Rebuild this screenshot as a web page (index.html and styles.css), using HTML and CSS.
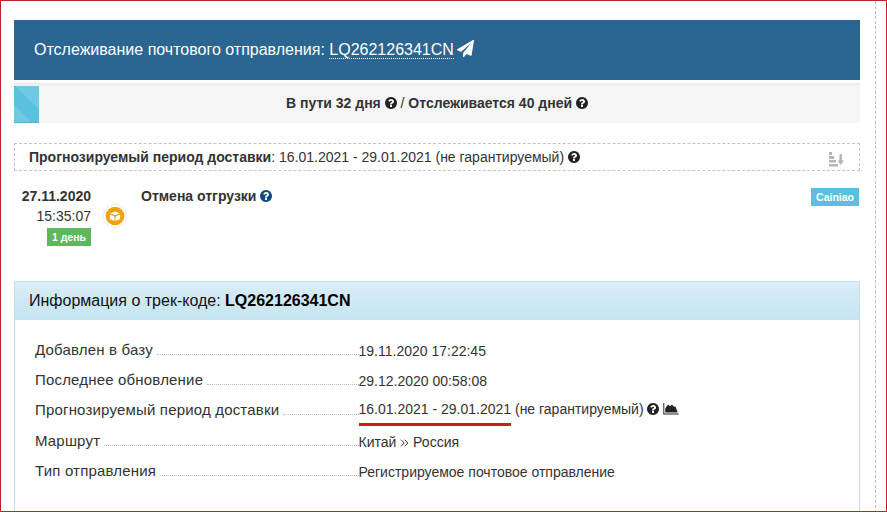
FILE: index.html
```html
<!DOCTYPE html>
<html lang="ru">
<head>
    <meta charset="UTF-8">
    <meta name="viewport" content="width=device-width, initial-scale=1.0">
    <title>Отслеживание почтового отправления</title>
    <link rel="stylesheet" href="styles.css">
</head>
<body>
    <svg class="sprite">
        <symbol id="question" viewBox="128 128 1536 1536">
            <path d="M1024 1376v-192q0-14-9-23t-23-9h-192q-14 0-23 9t-9 23v192q0 14 9 23t23 9h192q14 0 23-9t9-23zm256-672q0-88-55.5-163t-138.5-116-170-41q-243 0-371 213-15 24 8 42l132 100q7 6 19 6 16 0 25-12 53-68 86-92 34-24 86-24 48 0 85.5 26t37.5 59q0 38-20 61t-68 45q-63 28-115.5 86.5t-52.5 125.5v36q0 14 9 23t23 9h192q14 0 23-9t9-23q0-19 21.5-49.5t54.5-49.5q32-18 49-28.5t46-35 44.5-48 28-60.5 12.5-81zm384 192q0 209-103 385.5t-279.5 279.5-385.5 103-385.5-103-279.5-279.5-103-385.5 103-385.5 279.5-279.5 385.5-103 385.5 103 279.5 279.5 103 385.5z"/>
        </symbol>
    </svg>
    <div class="page">
        <div class="content">
            <h1 class="title"><span class="title-text">Отслеживание почтового отправления:</span> <a class="title-code">LQ262126341CN</a>
                <svg class="plane" viewBox="0 0 1792 1792"><path d="M1764 11q33 24 27 64l-256 1536q-5 29-32 45-14 8-31 8-11 0-24-5l-453-185-242 295q-18 23-49 23-13 0-22-4-19-7-30.5-23.5t-11.5-36.5v-349l864-1059-1069 925-395-162q-37-14-40-55-2-40 32-59l1664-960q15-9 32-9 20 0 36 11z"/></svg>
            </h1>

            <div class="progress">
                <div class="progress-bar"></div>
                <div class="progress-text"><b>В пути 32 дня</b> <svg class="icon"><use href="#question"/></svg> / <b>Отслеживается 40 дней</b> <svg class="icon"><use href="#question"/></svg></div>
            </div>

            <div class="forecast">
                <div><b>Прогнозируемый период доставки</b>: 16.01.2021 - 29.01.2021 (не гарантируемый) <svg class="icon"><use href="#question"/></svg></div>
                <svg class="sort" viewBox="0 0 16 15"><path d="M1 0h3v3H1zM1 4h5v3H1zM1 8h7v2.500H1zM1 12h9v2.500H1zM11.500 2h2.500v6.500h2L12.700 13 9.500 8.500h2z"/></svg>
            </div>

            <div class="event">
                <div class="event-date">
                    <b>27.11.2020</b>
                    <span>15:35:07</span>
                    <span class="label label-green">1 день</span>
                </div>
                <svg class="event-icon" viewBox="0 0 24 24">
                    <circle cx="12" cy="12" r="11.500" fill="#fff" stroke="#f6e8e2"/>
                    <circle cx="12" cy="12" r="9.300" fill="#f0a010"/>
                    <path fill="#fff" d="M12 7.500l4.800 1.900L12 11.300 7.200 9.400zM6.900 10.500l4.600 1.900v4.500l-4.600-2zM17.100 10.500l-4.600 1.900v4.500l4.600-2z"/>
                </svg>
                <div class="event-name"><b>Отмена отгрузки</b> <svg class="icon icon-blue"><use href="#question"/></svg></div>
                <span class="label label-blue">Cainiao</span>
            </div>

            <div class="panel">
                <div class="panel-heading"><span class="panel-text">Информация о трек-коде:</span> <b>LQ262126341CN</b></div>
                <dl class="info">
                    <dt>Добавлен в базу</dt>
                    <dd>19.11.2020 17:22:45</dd>
                    <dt>Последнее обновление</dt>
                    <dd>29.12.2020 00:58:08</dd>
                    <dt class="period">Прогнозируемый период доставки</dt>
                    <dd class="period"><span class="marked">16.01.2021 - 29.01.2021</span> (не гарантируемый) <svg class="icon"><use href="#question"/></svg>
                        <svg class="chart" viewBox="0 0 2048 1600"><path d="M2048 1408v128H0V0h128v1408zM256 1280V704l384-512 256 256 256-256 256 320 192-64 320 832z"/></svg></dd>
                    <dt>Маршрут</dt>
                    <dd>Китай <svg class="angle" viewBox="0 0 9 8"><path d="M1 .7L4.300 4 1 7.300M4.600 .7L7.900 4 4.600 7.300"/></svg> Россия</dd>
                    <dt>Тип отправления</dt>
                    <dd>Регистрируемое почтовое отправление</dd>
                </dl>
                <dl class="info info-more">
                    <dt>Второй доступный</dt>
                    <dd></dd>
                </dl>
            </div>
        </div>
    </div>
</body>
</html>
```

FILE: styles.css
```css
* {
    box-sizing: border-box;
}
body {
    margin: 0;
    font-family: "Liberation Sans", Arial, sans-serif;
    font-size: 14px;
    line-height: 20px;
    color: #333;
    background: #fff;
}
.sprite {
    display: none;
}
.page {
    height: 512px;
    padding: 19px 10px 0 13px;
    border: 1px solid #c8202b;
    overflow: hidden;
    display: flex;
}
.content {
    width: 862px;
    flex: none;
    height: 512px;
    margin-top: -19px;
    padding: 19px 15px 0 0;
    border-right: 1px dashed #bbb;
}
.icon {
    width: 12px;
    height: 12px;
    fill: #222;
    vertical-align: -1px;
}
.icon-blue {
    fill: #0d4a80;
}
.title {
    margin: 0;
    height: 60px;
    padding: 0 20px;
    font-size: 16px;
    font-weight: normal;
    line-height: 59px;
    color: #fff;
    background: #2b6693;
}
.title-code {
    border-bottom: 1px dotted #fff;
}
.plane {
    width: 17px;
    height: 17px;
    fill: #fff;
    margin-left: -1px;
    vertical-align: -2px;
}
.progress {
    display: flex;
    height: 40px;
    margin-top: 3px;
    padding-top: 3px;
    background: linear-gradient(#ebebeb, #f5f5f5 4px);
}
.progress-bar {
    width: 25px;
    height: 37px;
    background: linear-gradient(45deg, #70c8e2 30%, #5bc0de 30%, #5bc0de 62%, #70c8e2 62%);
    box-shadow: inset 0 -1px 0 #58afc9;
}
.progress-text {
    flex: 1;
    padding-right: 25px;
    line-height: 35px;
    text-align: center;
}
.forecast {
    display: flex;
    justify-content: space-between;
    height: 28px;
    margin-top: 20px;
    padding: 0 15px 0 14px;
    line-height: 26px;
    border: 1px dashed #c8c4bc;
}
.sort {
    width: 16px;
    height: 15px;
    margin-top: 8px;
    fill: #b5b5b5;
}
.event {
    display: flex;
    align-items: flex-start;
    height: 93px;
    margin-top: 17px;
}
.event-date {
    display: flex;
    flex-direction: column;
    align-items: flex-end;
    width: 77px;
    margin-top: -2px;
}
.event-icon {
    width: 24px;
    height: 24px;
    margin: 16px 0 0 12px;
}
.event-name {
    flex: 1;
    margin: -2px 0 0 14px;
}
.label {
    height: 18px;
    padding: 0 5px;
    font-size: 10.5px;
    font-weight: bold;
    line-height: 18px;
    color: #fff;
}
.label-green {
    margin-top: 2px;
    background: #5cb85c;
}
.label-blue {
    margin-right: 1px;
    background: #5bc0de;
}
.panel {
    height: 260px;
    border: 1px solid #c2e0e6;
    border-bottom: none;
}
.panel-heading {
    height: 38px;
    padding: 0 14px;
    font-size: 16px;
    line-height: 37px;
    color: #111;
    background: linear-gradient(#d9edf7, #c4e5f1);
}
.panel-heading b {
    color: #000;
}
.info {
    display: grid;
    grid-template-columns: 323.5px 1fr;
    grid-auto-rows: 30.300px;
    margin: 15px 20px 0 20px;
}
.info dt {
    display: flex;
    align-items: baseline;
    font-size: 15px;
    line-height: 30px;
    letter-spacing: 0.18px;
}
.info dt::after {
    content: "";
    flex: 1;
    margin-left: 4px;
    border-bottom: 1px dotted #bbb;
}
.info dd {
    margin: 0;
    line-height: 32px;
}
.info .period {
    line-height: 27px;
}
.info-more {
    margin-top: 18px;
}
.marked {
    padding-bottom: 6px;
    border-bottom: 3px solid #d01c1f;
}
.chart {
    width: 16px;
    height: 12px;
    fill: #222;
    vertical-align: -1px;
}
.angle {
    width: 9px;
    height: 8px;
    fill: none;
    stroke: #333;
}
```
